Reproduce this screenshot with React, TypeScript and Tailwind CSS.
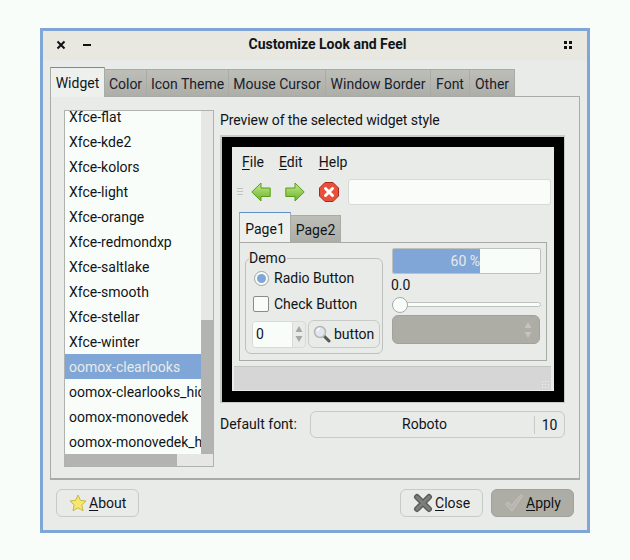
import React from 'react';

const tabs = [
  { label: 'Widget', width: 'w-[55px]' },
  { label: 'Color', width: 'w-[42px]' },
  { label: 'Icon Theme', width: 'w-[82px]' },
  { label: 'Mouse Cursor', width: 'w-[97px]' },
  { label: 'Window Border', width: 'w-[105px]' },
  { label: 'Font', width: 'w-[39px]' },
  { label: 'Other', width: 'w-[45px]' },
];

const themes = [
  'Xfce-flat',
  'Xfce-kde2',
  'Xfce-kolors',
  'Xfce-light',
  'Xfce-orange',
  'Xfce-redmondxp',
  'Xfce-saltlake',
  'Xfce-smooth',
  'Xfce-stellar',
  'Xfce-winter',
  'oomox-clearlooks',
  'oomox-clearlooks_hidpi',
  'oomox-monovedek',
  'oomox-monovedek_hidpi',
];

const Arrow: React.FC<{ flip?: boolean }> = ({ flip }) => (
  <svg width="20" height="20" viewBox="0 0 20 20" className={flip ? '-scale-x-100' : ''}>
    <defs>
      <linearGradient id="green" x1="0" y1="0" x2="0" y2="1">
        <stop offset="0" stopColor="#c4ea8e" />
        <stop offset="1" stopColor="#6ab22a" />
      </linearGradient>
    </defs>
    <path d="M.8 10 L10 1 V6 H19.2 V14.5 H10 V19 Z" fill="url(#green)" stroke="#5a9e16" strokeWidth="1" strokeLinejoin="round" />
  </svg>
);

const StopIcon = () => (
  <svg width="20" height="20" viewBox="0 0 20 20">
    <path d="M6 .5 H14 L19.5 6 V14 L14 19.5 H6 L.5 14 V6 Z" fill="#e8503a" stroke="#a8281a" />
    <path d="M6.5 6.5 L13.5 13.5 M13.5 6.5 L6.5 13.5" stroke="#fff" strokeWidth="3" strokeLinecap="round" />
  </svg>
);

const SearchIcon = () => (
  <svg width="18" height="18" viewBox="0 0 18 18">
    <path d="M10.5 10.5 L16 16" stroke="#555753" strokeWidth="3" strokeLinecap="round" />
    <circle cx="7" cy="7" r="5.5" fill="#dfe6ee" stroke="#b5b8b3" strokeWidth="1.5" />
    <path d="M4 6 A3.5 3.5 0 0 1 7 3.5" stroke="#fff" strokeWidth="1.5" fill="none" />
  </svg>
);

const StarIcon = () => (
  <svg width="18" height="18" viewBox="0 0 18 18">
    <path d="M9 1 L11.4 6.3 L17 7 L12.8 10.9 L14 16.8 L9 13.8 L4 16.8 L5.2 10.9 L1 7 L6.6 6.3 Z" fill="#f6e66e" stroke="#c9b84a" strokeLinejoin="round" />
  </svg>
);

const CloseIcon = () => (
  <svg width="20" height="20" viewBox="0 0 20 20">
    <path d="M4 4 L16 16 M16 4 L4 16" stroke="#5c5e5a" strokeWidth="6" strokeLinecap="round" />
    <path d="M4 4 L16 16 M16 4 L4 16" stroke="#7d7f7b" strokeWidth="3" strokeLinecap="round" />
  </svg>
);

const CheckIcon = () => (
  <svg width="20" height="20" viewBox="0 0 20 20">
    <path d="M1.5 11 L4.5 9 L7.5 12.5 L17 1.5 L18.5 3 L8 18 Z" fill="#b6b6af" stroke="#c4c4bd" strokeLinejoin="round" />
  </svg>
);

const Updown = ({ color }: { color: string }) => (
  <svg width="8" height="20" viewBox="0 0 8 20">
    <path d="M4 2 L7.5 8 H.5 Z M.5 12 H7.5 L4 18 Z" fill={color} />
  </svg>
);

const U: React.FC<{ children: React.ReactNode }> = ({ children }) => <span className="underline underline-offset-2">{children}</span>;

const Preview = () => (
  <div className="w-[345px] h-[268px] border-2 border-[#c8cac7] border-r border-b bg-black pt-[10px] pl-[10px]">
    <div className="w-[322px] h-[244px] bg-[#e8ebe8] flex flex-col">
      <div className="h-[30px] flex items-center gap-[15px] pl-[10px]">
        <span><U>F</U>ile</span>
        <span><U>E</U>dit</span>
        <span className="ml-px"><U>H</U>elp</span>
      </div>
      <div className="h-[29px] flex items-center">
        <div className="w-[6px] ml-[5px] flex flex-col gap-[2px]">
          <div className="h-px bg-[#c0c2bf]" />
          <div className="h-px bg-[#c0c2bf]" />
          <div className="h-px bg-[#c0c2bf]" />
        </div>
        <div className="ml-[8px] flex items-center">
          <Arrow />
          <div className="ml-[14px]"><Arrow flip /></div>
          <div className="ml-[14px]"><StopIcon /></div>
        </div>
        <div className="ml-[9px] w-[203px] h-[26px] bg-[#f8fdfa] border border-[#d8dad7] rounded-[3px]" />
      </div>
      <div className="mt-[7px] ml-[7px] flex items-end h-[29px]">
        <div className="w-[52px] h-[30px] pt-[3px] bg-[#eef0ee] border border-[#a9aba6] border-t-[#5f8fc8] border-b-0 flex items-center justify-center">Page1</div>
        <div className="w-[50px] h-[27px] pt-[3px] bg-gradient-to-b from-[#bebeb8] to-[#aeaea8] border border-[#a9aba6] border-l-0 flex items-center justify-center">Page2</div>
      </div>
      <div className="ml-[7px] w-[308px] h-[119px] border border-[#a9aba6] pl-[5px] flex gap-[9px]">
        <div className="relative mt-[15px] w-[138px] h-[96px] border border-[#bfc1be] rounded-[6px] pl-[6px]">
          <span className="absolute -top-[10px] left-[3px] bg-[#e8ebe8] leading-[18px] pr-[1px]">Demo</span>
          <div className="flex items-center gap-[5px] mt-[9px] h-[20px] ml-[2px]">
            <div className="w-[15px] h-[15px] rounded-full border border-[#a0a29f] bg-[#f8fdfa] flex items-center justify-center">
              <div className="w-[9px] h-[9px] rounded-full bg-[#7fa6d6]" />
            </div>
            Radio Button
          </div>
          <div className="flex items-center gap-[5px] mt-[6px] h-[20px] ml-[1px]">
            <div className="w-[16px] h-[16px] border border-[#8a8c88] rounded-[2px] bg-[#f8fdfa]" />
            Check Button
          </div>
          <div className="flex items-center gap-[2px] mt-[6px]">
            <div className="w-[54px] h-[27px] shrink-0 border border-[#d8dad7] rounded-[4px] flex overflow-hidden">
              <div className="w-[39px] bg-[#f8fdfa] pl-[3px] flex items-center">0</div>
              <div className="flex-1 border-l border-[#d8dad7] flex items-center justify-center"><Updown color="#a5a7a3" /></div>
            </div>
            <div className="w-[72px] h-[28px] shrink-0 border border-[#c8cac7] rounded-[6px] flex items-center gap-[3px] pl-[4px]">
              <SearchIcon />
              button
            </div>
          </div>
        </div>
        <div className="mt-[5px] w-[149px]">
          <div className="h-[26px] border border-[#bfc1be] rounded-[2px] bg-[#f8fdfa] overflow-hidden">
            <div className="h-full w-[87px] bg-[#7fa6d6] text-[#e8ebe8] text-right whitespace-nowrap leading-[24px]">60 %</div>
          </div>
          <div className="h-[20px] leading-[20px] mt-[1px] -ml-[1px]">0.0</div>
          <div className="relative h-[18px] mt-[1px]">
            <div className="absolute left-0 right-0 top-[6px] h-[5px] rounded-full bg-[#f8fdfa] border border-[#bfc1be]" />
            <div className="absolute left-0 top-[1px] w-[16px] h-[16px] rounded-full bg-[#f8fdfa] border border-[#a9aba6]" />
          </div>
          <div className="h-[29px] mt-[1px] w-[148px] bg-[#adada5] border border-[#a0a29c] rounded-[6px] flex items-center justify-end pr-[7px]"><Updown color="#c4c4bd" /></div>
        </div>
      </div>
      <div className="relative mt-[5px] ml-[2px] w-[317px] h-[24px] bg-[#d6d6d6] border-t border-[#c2c4c1]">
        <div className="absolute right-0 bottom-0 w-[10px] h-[10px] bg-[radial-gradient(#f4f4f4_1px,transparent_1px)] bg-[length:3px_3px]" />
      </div>
    </div>
  </div>
);

const App: React.FC = () => {
  return (
    <div className="w-[630px] h-[560px] bg-[#f8fdfa] pt-[28px] pl-[40px] text-[14px] text-[#101418] font-['Roboto',sans-serif]">
      <div className="w-[550px] h-[505px] border-[3px] border-[#7fa6d6] bg-[#e8ebe8] flex flex-col">
        <div className="h-[29px] bg-[#e8e7e0] flex items-center pl-[13px] pr-[13px] pb-[2px] shrink-0">
          <svg width="10" height="10" viewBox="0 0 10 10" className="shrink-0">
            <path d="M1.5 1.5 L8.5 8.5 M8.5 1.5 L1.5 8.5" stroke="#111" strokeWidth="2" />
          </svg>
          <div className="ml-[17px] w-[8px] h-[2px] bg-[#111] shrink-0" />
          <div className="flex-1 text-center font-bold">Customize Look and Feel</div>
          <div className="grid grid-cols-2 gap-[2px] shrink-0 mr-[2px]">
            <div className="w-[3px] h-[3px] bg-[#111]" />
            <div className="w-[3px] h-[3px] bg-[#111]" />
            <div className="w-[3px] h-[3px] bg-[#111]" />
            <div className="w-[3px] h-[3px] bg-[#111]" />
          </div>
        </div>

        <div className="ml-[7px] mt-[7px] flex items-end h-[30px] relative z-10">
          {tabs.map((tab, index) => (
            <div
              key={tab.label}
              className={
                index === 0
                  ? `${tab.width} h-[30px] pt-[2px] bg-[#eef0ee] border border-[#a9aba6] border-t-[#5f8fc8] border-b-0 flex items-center justify-center`
                  : `${tab.width} h-[28px] pt-[2px] bg-gradient-to-b from-[#bebeb8] to-[#aeaea8] border border-[#a9aba6] border-l-0 flex items-center justify-center text-[#18202c] whitespace-nowrap`
              }
            >
              {tab.label}
            </div>
          ))}
        </div>

        <div className="ml-[7px] w-[530px] h-[384px] border border-[#a9aba6] border-b-2 flex pl-[13px] pt-[13px] -mt-px">
          <div className="w-[150px] h-[357px] border border-[#b0b2af] bg-[#f8fdfa] relative overflow-hidden">
            <div className="w-[136px] h-[343px] overflow-hidden">
              <div className="-mt-[7px]">
                {themes.map((name) => (
                  <div
                    key={name}
                    className={`h-[25px] leading-[27px] pl-[4px] whitespace-nowrap ${name === 'oomox-clearlooks' ? 'bg-[#7fa6d6] text-[#e8ebe8]' : ''}`}
                  >
                    {name}
                  </div>
                ))}
              </div>
            </div>
            <div className="absolute right-0 top-0 w-[12px] h-[343px] bg-[#e6e7e5]">
              <div className="absolute bottom-0 w-full h-[134px] bg-[#b3b3b1]" />
            </div>
            <div className="absolute left-0 bottom-0 right-0 h-[12px] bg-[#e6e7e5]">
              <div className="h-full w-[112px] bg-[#b3b3b1]" />
            </div>
          </div>
          <div className="ml-[6px]">
            <div className="h-[25px] leading-[20px] tracking-[-0.08px]">Preview of the selected widget style</div>
            <Preview />
            <div className="mt-[8px] flex items-center">
              <span className="w-[90px]">Default font:</span>
              <div className="w-[255px] h-[27px] border border-[#c8cac7] rounded-[6px] flex items-center">
                <div className="flex-1 text-center pl-[4px]">Roboto</div>
                <div className="w-[30px] h-[18px] border-l border-[#c8cac7] text-center leading-[18px]">10</div>
              </div>
            </div>
          </div>
        </div>

        <div className="flex mt-[9px] ml-[13px] w-[518px]">
          <div className="w-[83px] h-[28px] border border-[#c8cac7] rounded-[6px] flex items-center pl-[12px] gap-[2px]">
            <StarIcon />
            <span><U>A</U>bout</span>
          </div>
          <div className="ml-auto w-[83px] h-[28px] border border-[#c8cac7] rounded-[6px] flex items-center pl-[12px] gap-[2px]">
            <CloseIcon />
            <span><U>C</U>lose</span>
          </div>
          <div className="ml-[8px] w-[83px] h-[28px] border border-[#a0a29c] rounded-[6px] bg-[#adada5] flex items-center pl-[12px] gap-[2px]">
            <CheckIcon />
            <span><U>A</U>pply</span>
          </div>
        </div>
      </div>
    </div>
  );
};

export default App;
